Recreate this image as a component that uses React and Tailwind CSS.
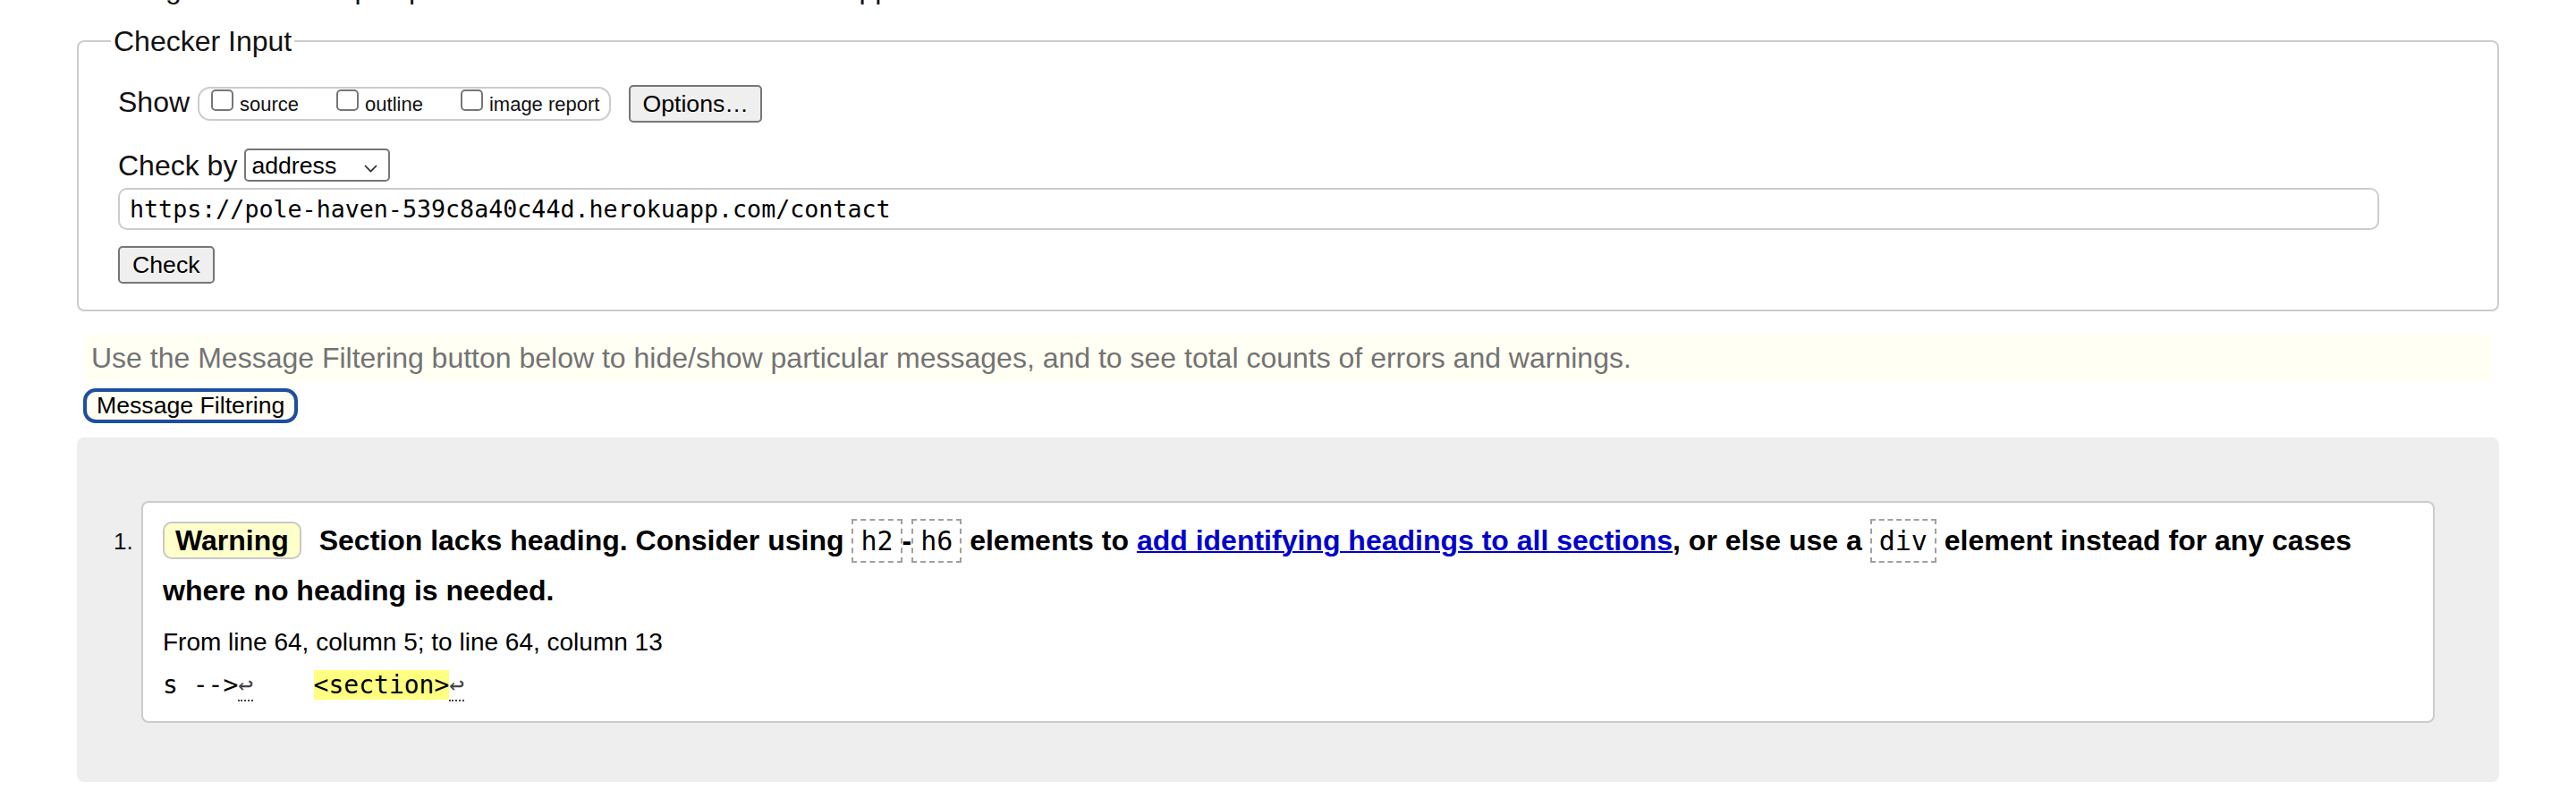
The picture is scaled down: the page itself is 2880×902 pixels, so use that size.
import React from "react";

const mono = "font-['DejaVu_Sans_Mono',Menlo,monospace]";

function CodeBox({ children }) {
  return (
    <code
      className={`${mono} inline-block border-2 border-dashed border-[#a0a0a0] px-[8px] py-[5px] text-[30px] leading-[35px] font-normal`}
    >
      {children}
    </code>
  );
}

function LineBreak() {
  return (
    <span className="border-b-2 border-dotted border-[#444] text-[#444]">↩</span>
  );
}

function ShowOption({ label, first }) {
  return (
    <label className={`flex items-end ${first ? "" : "ml-[42px]"}`}>
      <input
        type="checkbox"
        className="appearance-none w-[25px] h-[24px] mb-[4px] border-2 border-[#767676] rounded-[5px] bg-white"
      />
      <span className="ml-[7px] text-[22px] leading-[22px] text-[#111]">{label}</span>
    </label>
  );
}

export default function App() {
  return (
    <div className="min-h-screen bg-white text-[#111] font-['Liberation_Sans',Arial,sans-serif] px-[86px]">
      {/* results heading, scrolled mostly out of view */}
      <div className="h-[28px] overflow-hidden">
        <h2 className="-mt-[29px] -ml-[6px] text-[32px] leading-[32px] whitespace-nowrap">
          Showing results for https://pole-haven-539c8a40c44d.herokuapp.com/contact
        </h2>
      </div>

      <fieldset className="border-2 border-[#cccccc] rounded-[8px] pl-[44px] pr-[44px] pt-[31px] pb-[29px]">
        <legend className="-ml-[8px] px-[3px] text-[32px] leading-[36px]">Checker Input</legend>

        <div className="flex items-center h-[42px]">
          <span className="text-[32px] leading-[36px] pb-[4px] mr-[9px]">Show</span>
          <div className="flex items-center h-[38px] border-2 border-[#cccccc] rounded-[14px] pl-[13px] pr-[11px] pb-[4px]">
            <ShowOption label="source" first />
            <ShowOption label="outline" />
            <ShowOption label="image report" />
          </div>
          <button className="ml-[20px] h-[42px] px-[13px] border-2 border-[#767676] rounded-[5px] bg-[#efefef] text-[26.67px] leading-[30px] text-black">
            Options…
          </button>
        </div>

        <div className="flex items-center mt-[29px]">
          <span className="text-[32px] leading-[36px] mr-[8px]">Check by</span>
          <div className="flex justify-between w-[163px] h-[37px] border-2 border-[#767676] rounded-[5px] bg-white pl-[6px] pr-[12px] items-center">
            <span className="text-[26.67px] leading-[30px] text-black">address</span>
            <svg width="15" height="9" viewBox="0 0 15 9" className="mt-[8px]">
              <path d="M1 1l6.5 6.5L14 1" fill="none" stroke="#222" strokeWidth="1.6" />
            </svg>
          </div>
        </div>

        <div
          className={`${mono} mt-[7px] w-[2528px] h-[47px] border-2 border-[#cccccc] rounded-[10px] pl-[11px] flex items-center text-[26.67px] text-black`}
        >
          https://pole-haven-539c8a40c44d.herokuapp.com/contact
        </div>

        <button className="mt-[18px] h-[42px] px-[14px] border-2 border-[#767676] rounded-[5px] bg-[#efefef] text-[26.67px] leading-[30px] text-black">
          Check
        </button>
      </fieldset>

      <div className="mt-[26px] mx-[8px] h-[52px] bg-[#fffff3] flex items-center pl-[8px] text-[32px] leading-[36px] text-[#737373]">
        Use the Message Filtering button below to hide/show particular messages, and to see total counts of errors and warnings.
      </div>

      <button className="mt-[8px] ml-[7px] h-[39px] px-[11px] border-[4px] border-[#1f4e9e] rounded-[14px] bg-[#fffff4] text-[26.67px] leading-[29px] text-black">
        Message Filtering
      </button>

      <div className="mt-[16px] bg-[#eeeeee] rounded-[8px] pt-[71px] pb-[66px] pl-[41px] pr-[72px]">
        <div className="flex items-start">
          <span className="w-[31px] shrink-0 mt-[30px] text-[26px] leading-[30px]">1.</span>
          <div className="flex-1 border-2 border-[#cccccc] rounded-[8px] bg-white pt-[14px] pb-[20px] pl-[22px] pr-[20px]">
            <p className="text-[32px] font-bold leading-[56px] text-black">
              <span className="inline-block border-2 border-[#c8c8c8] bg-[#ffffcc] rounded-[10px] px-[12px] leading-[38px] mr-[11px]">
                Warning
              </span>{" "}
              Section lacks heading. Consider using <CodeBox>h2</CodeBox>-<CodeBox>h6</CodeBox> elements to{" "}
              <a href="#" className="text-[#0000cc] underline decoration-2">
                add identifying headings to all sections
              </a>
              , or else use a <CodeBox>div</CodeBox> element instead for any cases where no heading is needed.
            </p>
            <p className="mt-[10px] text-[28px] leading-[40px] text-black">
              From line 64, column 5; to line 64, column 13
            </p>
            <p className={`${mono} mt-[8px] text-[28px] leading-[40px] whitespace-pre text-black`}>
              s --&gt;<LineBreak />{"    "}
              <span className="bg-[#ffff80]">&lt;section&gt;</span>
              <LineBreak />
            </p>
          </div>
        </div>
      </div>
    </div>
  );
}
